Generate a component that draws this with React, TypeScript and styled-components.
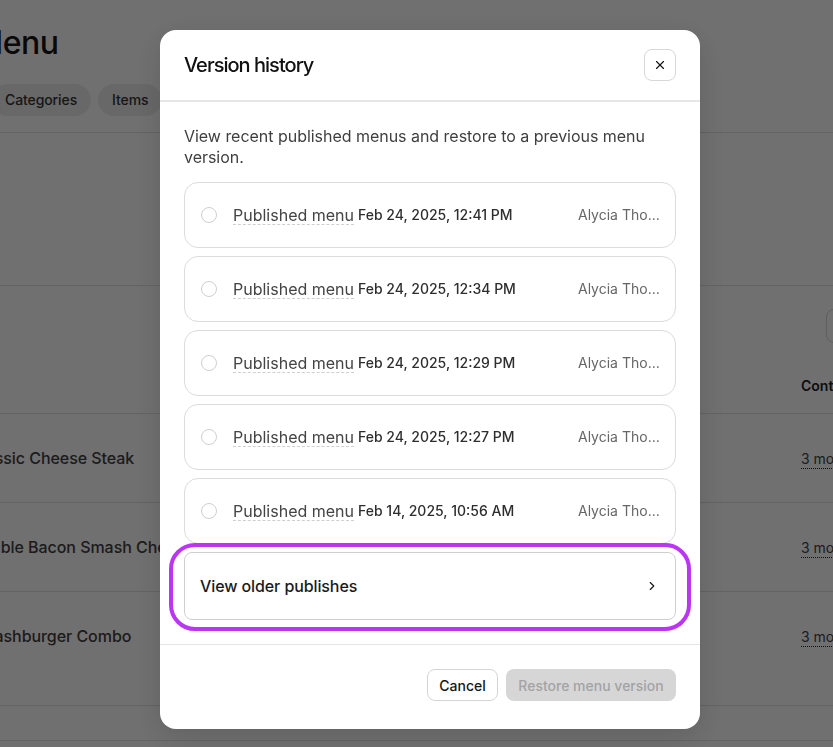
import React from "react";
import styled, { createGlobalStyle } from "styled-components";
import { ChevronRight, X } from "lucide-react";

const versions = [
  "Feb 24, 2025, 12:41 PM",
  "Feb 24, 2025, 12:34 PM",
  "Feb 24, 2025, 12:29 PM",
  "Feb 24, 2025, 12:27 PM",
  "Feb 14, 2025, 10:56 AM",
];

const items = [
  { name: "Classic Cheese Steak", tall: false },
  { name: "Double Bacon Smash Cheeseburger", tall: false },
  { name: "Smashburger Combo", tall: true },
];

const App = () => {
  return (
    <>
      <GlobalStyle />
      <Page>
        <Title>Menu</Title>
        <Tabs>
          <Tab>Categories</Tab>
          <Tab>Items</Tab>
        </Tabs>
        <Banner />
        <Toolbar>
          <ToolButton />
        </Toolbar>
        <TableHead>
          <span />
          <span>Contains</span>
        </TableHead>
        {items.map((item) => (
          <TableRow key={item.name} $tall={item.tall}>
            <ItemName>{item.name}</ItemName>
            <Modifiers>3 modifiers</Modifiers>
          </TableRow>
        ))}
        <TableRow $short />
      </Page>
      <Scrim>
        <Modal>
          <ModalHeader>
            <ModalTitle>Version history</ModalTitle>
            <CloseButton aria-label="Close">
              <X size={14} strokeWidth={2} />
            </CloseButton>
          </ModalHeader>
          <ModalBody>
            <Intro>View recent published menus and restore to a previous menu version.</Intro>
            <VersionList>
              {versions.map((date) => (
                <VersionRow key={date}>
                  <Radio />
                  <VersionName>Published menu</VersionName>
                  <VersionDate>{date}</VersionDate>
                  <VersionAuthor>Alycia Thompson</VersionAuthor>
                </VersionRow>
              ))}
              <Highlighted>
                <OlderButton>
                  View older publishes
                  <ChevronRight size={14} strokeWidth={2} />
                </OlderButton>
              </Highlighted>
            </VersionList>
          </ModalBody>
          <ModalFooter>
            <CancelButton>Cancel</CancelButton>
            <RestoreButton disabled>Restore menu version</RestoreButton>
          </ModalFooter>
        </Modal>
      </Scrim>
    </>
  );
};

const GlobalStyle = createGlobalStyle`
  html, body {
    margin: 0;
    height: 100%;
    overflow: hidden;
    background: #fff;
    font-family: Inter, "Liberation Sans", sans-serif;
  }
  * {
    box-sizing: border-box;
  }
`;

const Page = styled.div`
  width: 1200px;
  height: 747px;
  margin-left: -30px;
  color: #1f1f1f;
`;

const Title = styled.h1`
  margin: 0;
  padding: 23px 0 0 4px;
  height: 84px;
  font-size: 32px;
  line-height: 39px;
  font-weight: 500;
  letter-spacing: -0.5px;
  color: #161616;
`;

const Tabs = styled.div`
  display: flex;
  gap: 7px;
  height: 49px;
  padding: 0 0 17px 21px;
  border-bottom: 1px solid #e2e2e2;
`;

const Tab = styled.div`
  height: 32px;
  padding: 0 14px;
  border-radius: 16px;
  background: #ededed;
  font-size: 14px;
  font-weight: 500;
  line-height: 32px;
  letter-spacing: -0.1px;
  color: #333;
`;

const Banner = styled.div`
  height: 153px;
  border-bottom: 1px solid #e2e2e2;
`;

const Toolbar = styled.div`
  height: 57px;
  padding: 23px 0 0 856px;
`;

const ToolButton = styled.div`
  width: 60px;
  height: 34px;
  border: 1px solid #d6d6d6;
  border-radius: 8px;
`;

const TableHead = styled.div`
  display: grid;
  grid-template-columns: 831px 1fr;
  height: 71px;
  padding-top: 34px;
  border-bottom: 1px solid #e2e2e2;
  font-size: 14px;
  line-height: 18px;
  font-weight: 600;
  color: #222;
`;

const TableRow = styled.div<{ $tall?: boolean; $short?: boolean }>`
  display: grid;
  grid-template-columns: 831px 1fr;
  height: ${(p) => (p.$short ? "25px" : p.$tall ? "114px" : "89px")};
  padding-top: 34px;
  border-bottom: 1px solid #e2e2e2;
`;

const ItemName = styled.span`
  font-size: 16px;
  line-height: 20px;
  font-weight: 500;
  letter-spacing: -0.05px;
  color: #404040;
`;

const Modifiers = styled.span`
  justify-self: start;
  font-size: 14px;
  line-height: 18px;
  margin-top: 2px;
  height: 19px;
  color: #444;
  border-bottom: 1px dotted #222;
`;

const Scrim = styled.div`
  position: fixed;
  inset: 0;
  background: rgba(0, 0, 0, 0.56);
`;

const Modal = styled.div`
  position: absolute;
  left: 160px;
  top: 30px;
  width: 540px;
  height: 699px;
  display: flex;
  flex-direction: column;
  background: #fff;
  border-radius: 16px;
  box-shadow: 0 8px 32px rgba(0, 0, 0, 0.14);
`;

const ModalHeader = styled.div`
  display: flex;
  align-items: center;
  justify-content: space-between;
  height: 72px;
  padding: 0 24px;
  border-bottom: 2px solid #e6e6e6;
`;

const ModalTitle = styled.h2`
  margin: 0;
  font-size: 20px;
  font-weight: 500;
  letter-spacing: -0.98px;
  color: #111;
`;

const CloseButton = styled.button`
  display: flex;
  align-items: center;
  justify-content: center;
  width: 32px;
  height: 32px;
  padding: 0;
  background: #fff;
  border: 1px solid #d8d8d8;
  border-radius: 8px;
  color: #161616;
`;

const ModalBody = styled.div`
  flex: 1;
  padding: 24px 24px 0;
  border-bottom: 1px solid #e6e6e6;
`;

const Intro = styled.p`
  margin: 0 0 14px;
  font-size: 16px;
  line-height: 21px;
  letter-spacing: -0.03px;
  color: #3f3f3f;
`;

const VersionList = styled.div`
  display: flex;
  flex-direction: column;
  gap: 8px;
`;

const VersionRow = styled.div`
  display: flex;
  align-items: center;
  height: 66px;
  padding: 0 15px 0 16px;
  border: 1px solid #dcdcdc;
  border-radius: 14px;
`;

const Radio = styled.span`
  flex: none;
  width: 16px;
  height: 16px;
  margin-right: 16px;
  border: 1px solid #cfcfcf;
  border-radius: 50%;
`;

const VersionName = styled.span`
  flex: none;
  margin-right: 4px;
  padding-top: 1px;
  font-size: 16px;
  line-height: 18px;
  color: #444;
  border-bottom: 1px dashed #cfcfcf;
`;

const VersionDate = styled.span`
  flex: none;
  padding-bottom: 2px;
  font-size: 14px;
  font-weight: 500;
  color: #2e2e2e;
`;

const VersionAuthor = styled.span`
  margin-left: auto;
  padding-bottom: 2px;
  width: 82px;
  font-size: 14px;
  color: #666;
  white-space: nowrap;
  overflow: hidden;
  text-overflow: ellipsis;
`;

const Highlighted = styled.div`
  position: relative;
  &::after {
    content: "";
    position: absolute;
    inset: -9px -15px -11px -15px;
    border: 4px solid #bb36f2;
    border-radius: 26px;
    pointer-events: none;
  }
`;

const OlderButton = styled.button`
  display: flex;
  align-items: center;
  justify-content: space-between;
  width: 100%;
  height: 68px;
  padding: 0 16px 0 15px;
  background: #fff;
  border: 1px solid #cfcfcf;
  border-radius: 8px;
  font-family: inherit;
  font-size: 16px;
  font-weight: 500;
  letter-spacing: -0.1px;
  color: #1a1a1a;
`;

const ModalFooter = styled.div`
  display: flex;
  justify-content: flex-end;
  gap: 8px;
  height: 84px;
  padding: 24px 24px 0;
`;

const CancelButton = styled.button`
  width: 71px;
  height: 32px;
  padding: 0;
  background: #fff;
  border: 1px solid #d4d4d4;
  border-radius: 8px;
  font-family: inherit;
  font-size: 14px;
  font-weight: 500;
  color: #161616;
`;

const RestoreButton = styled.button`
  width: 170px;
  height: 32px;
  padding: 0;
  background: #d6d6d6;
  border: none;
  border-radius: 8px;
  font-family: inherit;
  font-size: 14px;
  font-weight: 500;
  color: #a3a3a3;
`;

export default App;
